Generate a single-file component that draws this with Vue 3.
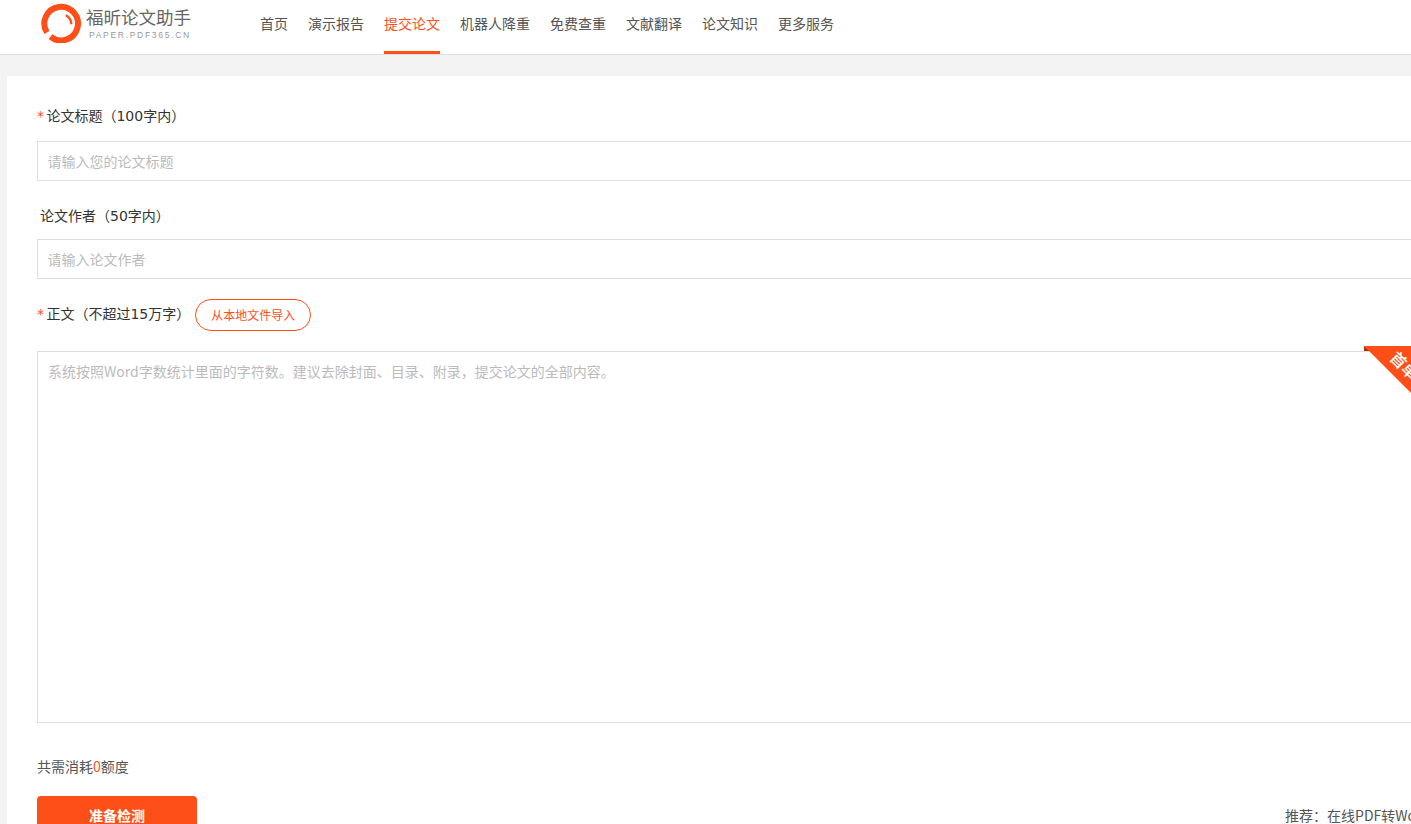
<template>
  <div class="page">
    <header class="topbar">
      <a class="logo">
        <svg class="logo-mark" width="40" height="40" viewBox="0 0 40 40">
          <path d="M5.9 29.5 A16.8 16.8 0 1 1 9.5 33.6" fill="none" stroke="#ff4f19" stroke-width="6" />
          <path d="M24.8 12.3 A10 10 0 0 1 30.3 21.3" fill="none" stroke="#ff4f19" stroke-width="2.4" />
        </svg>
        <div class="logo-text">
          <div class="logo-name">福昕论文助手</div>
          <div class="logo-url">PAPER.PDF365.CN</div>
        </div>
      </a>
      <nav class="nav">
        <a v-for="item in navItems" :key="item" class="nav-item" :class="{ active: item === current }">{{ item }}</a>
      </nav>
    </header>

    <main class="card">
      <div class="field">
        <label class="label"><span class="star">*</span> 论文标题（100字内）</label>
        <input class="input" placeholder="请输入您的论文标题" />
      </div>
      <div class="field author">
        <label class="label plain">论文作者（50字内）</label>
        <input class="input" placeholder="请输入论文作者" />
      </div>
      <div class="body-head">
        <label class="label"><span class="star">*</span> 正文（不超过15万字）</label>
        <button class="import">从本地文件导入</button>
      </div>
      <div class="editor">
        <textarea class="text" placeholder="系统按照Word字数统计里面的字符数。建议去除封面、目录、附录，提交论文的全部内容。"></textarea>
        <div class="ribbon-fold"></div>
        <div class="ribbon"><span>首单</span></div>
      </div>
      <p class="cost">共需消耗<span class="zero">0</span>额度</p>
      <div class="actions">
        <button class="submit">准备检测</button>
        <span class="promo">推荐：在线PDF转Word</span>
      </div>
    </main>
  </div>
</template>

<script setup>
const navItems = ['首页', '演示报告', '提交论文', '机器人降重', '免费查重', '文献翻译', '论文知识', '更多服务']
const current = '提交论文'
</script>

<style>
html, body {
  margin: 0;
  height: 824px;
  overflow: hidden;
  background: #f3f3f3;
}
</style>

<style scoped>
.page {
  width: 1500px;
  font-family: "Noto Sans CJK SC", "Liberation Sans", sans-serif;
  font-size: 14px;
  color: #333;
}

.topbar {
  display: flex;
  height: 54px;
  background: #fff;
  border-bottom: 1px solid #ddd;
  padding-left: 41px;
}

.logo {
  display: flex;
  width: 219px;
  height: 54px;
  gap: 5px;
}

.logo-mark {
  margin-top: 3px;
}

.logo-name {
  font-size: 17.5px;
  line-height: 20px;
  margin-top: 7px;
  color: #666;
}

.logo-url {
  font-size: 8.5px;
  line-height: 10px;
  margin: 3px 0 0 3px;
  letter-spacing: 1.7px;
  color: #999;
  font-family: "Liberation Sans", sans-serif;
}

.nav {
  display: flex;
  gap: 20px;
}

.nav-item {
  height: 51px;
  line-height: 46px;
  color: #555;
  border-bottom: 3px solid transparent;
}

.nav-item.active {
  color: #ff4f19;
  border-bottom-color: #ff4f19;
}

.card {
  margin: 21px 0 0 7px;
  padding: 30px 30px 0;
  width: 1420px;
  background: #fff;
  height: 800px;
}

.label {
  display: block;
  line-height: 20px;
  margin: 0 0 15px;
  font-family: "DejaVu Sans", "Noto Sans CJK SC", sans-serif;
}

.label.plain {
  padding-left: 3px;
  margin: 0 0 13px;
}

.star {
  color: #ff4f19;
  margin-right: -2px;
}

.author {
  margin-top: 25px;
}

.input {
  display: block;
  box-sizing: border-box;
  width: 100%;
  height: 40px;
  border: 1px solid #ddd;
  padding: 0 10px 0 9.5px;
  font: inherit;
  outline: none;
}

.input::placeholder,
.text::placeholder {
  color: #bbb;
}

.body-head {
  display: flex;
  align-items: center;
  margin-top: 20px;
}

.body-head .label {
  margin: 0 5px 2px 0;
}

.import {
  width: 116px;
  height: 32px;
  border: 1px solid #ff4f19;
  border-radius: 16px;
  background: #fff;
  color: #ff4f19;
  font: inherit;
  font-size: 12px;
  padding: 0 0 2px;
}

.editor {
  position: relative;
  margin-top: 20px;
  height: 372px;
}

.text {
  display: block;
  box-sizing: border-box;
  width: 100%;
  height: 100%;
  border: 1px solid #ddd;
  padding: 9px 10px;
  font: inherit;
  line-height: 20px;
  resize: none;
  outline: none;
}

.ribbon {
  position: absolute;
  top: -5px;
  right: -4px;
  width: 97px;
  height: 97px;
  background: #ff4f19;
  clip-path: polygon(0 0, 100% 0, 100% 100%);
  overflow: hidden;
}

.ribbon span {
  position: absolute;
  top: 9px;
  left: 25px;
  transform: rotate(45deg);
  color: #fff;
  font-size: 16px;
  font-weight: 500;
  line-height: 20px;
}

.ribbon-fold {
  position: absolute;
  top: -5px;
  right: 87px;
  width: 6px;
  height: 5px;
  background: #b52a00;
  clip-path: polygon(0 0, 0 100%, 100% 100%);
}

.cost {
  margin: 33px 0 0;
  line-height: 20px;
  color: #555;
}

.zero {
  color: #ff4f19;
}

.actions {
  display: flex;
  justify-content: space-between;
  margin-top: 20px;
}

.submit {
  width: 160px;
  height: 40px;
  border: none;
  border-radius: 4px;
  background: #ff4f19;
  color: #fff;
  font: inherit;
  font-weight: 700;
  padding: 0 0 2px;
}

.promo {
  line-height: 38px;
  margin-right: 27px;
  color: #555;
}
</style>
